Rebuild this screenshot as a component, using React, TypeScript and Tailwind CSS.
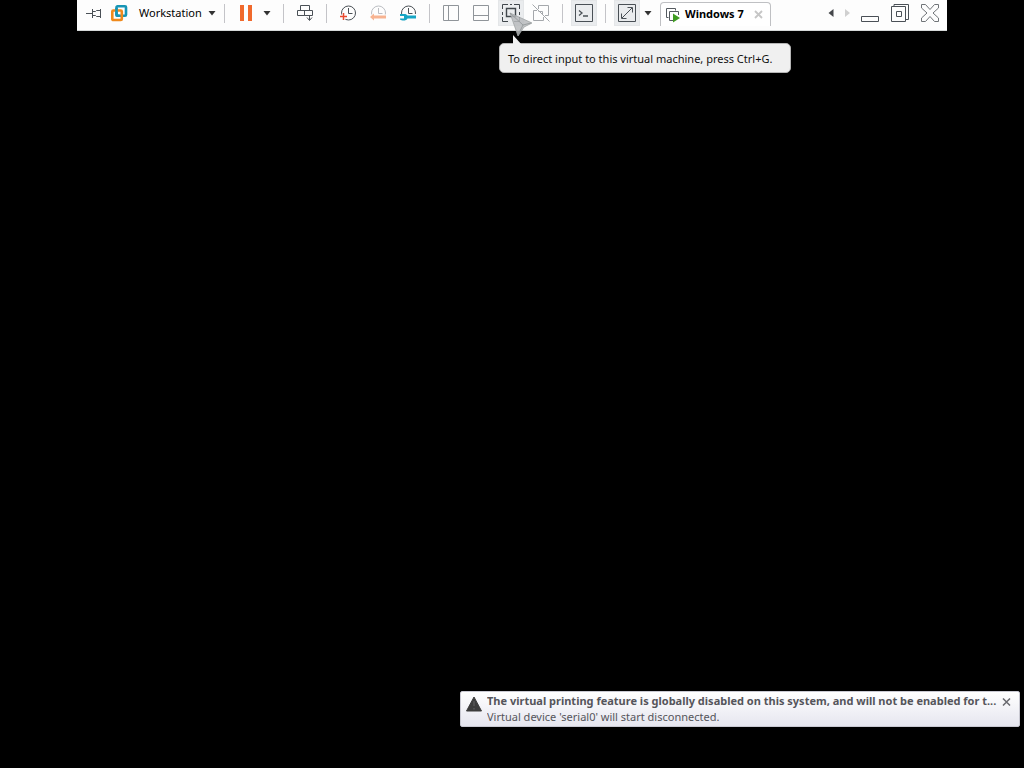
import type { ReactNode } from "react";
import clsx from "clsx";

interface ToolButtonProps {
  label: string;
  active?: boolean;
  children: ReactNode;
}

function ToolButton({ label, active, children }: ToolButtonProps) {
  return (
    <button
      type="button"
      aria-label={label}
      className="flex h-[26px] w-[30px] shrink-0 items-center justify-center"
    >
      <span
        className={clsx(
          "flex h-[26px] w-[26px] items-center justify-center",
          active && "border border-[#e4e6e8] bg-[#eaecee]"
        )}
      >
        {children}
      </span>
    </button>
  );
}

function Separator() {
  return <div className="mx-1.5 h-[19px] w-px shrink-0 bg-[#c4c4c8]" />;
}

function Caret() {
  return (
    <svg width="8" height="5" viewBox="0 0 8 5" fill="#333" className="shrink-0">
      <path d="M0.5 0h7L4 4.5z" />
    </svg>
  );
}

function CaretButton({ label }: { label: string }) {
  return (
    <button
      type="button"
      aria-label={label}
      className="flex h-[26px] w-3 shrink-0 items-center justify-center"
    >
      <Caret />
    </button>
  );
}

interface IconProps {
  children: ReactNode;
  stroke?: string;
}

/* 20px canvas shared by the toolbar icons */
function Icon({ children, stroke = "#4a5056" }: IconProps) {
  return (
    <svg
      width="20"
      height="20"
      viewBox="0 0 20 20"
      fill="none"
      stroke={stroke}
      className="shrink-0"
    >
      {children}
    </svg>
  );
}

function Clock({ stroke = "#4a5056" }: { stroke?: string }) {
  return (
    <g stroke={stroke}>
      <circle cx="10.5" cy="10" r="7" />
      <path d="M10.5 5v5.5h4" />
    </g>
  );
}

function Toolbar() {
  return (
    <header className="mx-auto flex h-[31px] w-full max-w-[870px] items-start border-b border-[#d5d8d8] bg-[#fdfdfd] px-0.5">
      <div className="flex h-[26px] items-center">
        <ToolButton label="Pin toolbar">
          <Icon>
            <path d="M2 10.5h6M8.5 6v9M8.5 8.5h3l1 -1h4M8.5 12.5h3l1 1h4M16.5 6v9" />
          </Icon>
        </ToolButton>
        <button type="button" className="flex h-[26px] shrink-0 items-center text-[11px]">
          <svg width="20" height="20" viewBox="0 0 20 20" fill="none" strokeWidth="2.6">
            <rect x="7.5" y="3.3" width="9.5" height="9.5" rx="1" stroke="#1795b5" />
            <rect x="3.3" y="7.5" width="9.5" height="9.5" rx="1" stroke="#f08a1c" />
            <path d="M7.5 5v6.8a1 1 0 0 0 1 1h2" stroke="#1795b5" />
          </svg>
          <span className="ml-2.5 w-16 text-left whitespace-nowrap">Workstation</span>
          <span className="mr-0.5 ml-[5px]">
            <Caret />
          </span>
        </button>
        <Separator />

        <ToolButton label="Suspend">
          <svg width="14" height="16" viewBox="0 0 14 16" fill="#f0692c">
            <path d="M1 0h4v16H1zM9 0h4v16H9z" />
          </svg>
        </ToolButton>
        <div className="mr-1">
          <CaretButton label="Power options" />
        </div>
        <Separator />

        <ToolButton label="Send Ctrl+Alt+Del">
          <Icon>
            <path d="M5.5 2.5h9v5h-9zM2.500 7.5h7v5h-7zM9.5 7.5h8v5h-8zM14.5 12v5M12 14.500l2.500 3 2.500-3" />
          </Icon>
        </ToolButton>
        <Separator />

        <ToolButton label="Take snapshot">
          <Icon>
            <Clock />
            <path d="M1 13.5h7.5M5.500 10.5v7" stroke="#fdfdfd" strokeWidth="3.5" />
            <path d="M2 13.5h7M5.500 10v7" stroke="#e8492e" strokeWidth="1.5" />
          </Icon>
        </ToolButton>
        <ToolButton label="Revert snapshot">
          <Icon>
            <Clock stroke="#bbbdc2" />
            <path d="M2 11.5h16v7H2z" fill="#fdfdfd" stroke="none" />
            <path d="M2 14l4-3.500v2h12v3H6v2z" fill="#f7b391" stroke="none" />
          </Icon>
        </ToolButton>
        <ToolButton label="Manage snapshots">
          <Icon>
            <Clock />
            <path d="M1 11h18v8H1z" fill="#fdfdfd" stroke="none" />
            <path
              d="M2 11h4c2 0 3 .7 3.500 1.500H18v3H9.500C8.500 18 4 18 2 16.500v-1h4V13H2z"
              fill="#16a5c4"
              stroke="none"
            />
          </Icon>
        </ToolButton>
        <Separator />

        <ToolButton label="Show library">
          <Icon stroke="#90959a">
            <path d="M2.5 2.5h15v15h-15zM7.5 2.5v15" />
          </Icon>
        </ToolButton>
        <ToolButton label="Show thumbnail bar">
          <Icon stroke="#90959a">
            <path d="M2.5 2.5h15v15h-15zM2.5 12.5h15" />
          </Icon>
        </ToolButton>
        <div className="relative">
          <ToolButton label="Enter full screen" active>
            <Icon stroke="#41474c">
              <path d="M1.5 6v-4.5H7M13 1.5h5.5V6M18.5 9v3M18.5 14v4.5H13M7 18.5H1.5V14M1.500 12V9M9 1.5h2" />
              <path d="M5.5 5.5h9v8h-9z" strokeWidth="1.4" />
            </Icon>
          </ToolButton>
          <Tooltip />
        </div>
        <ToolButton label="Unity">
          <Icon stroke="#a5a8ac">
            <path d="M7.5 6V2.500h10v10H14M6 7.5H2.500v10h10V14M7.500 8.500h4v3M1.500 1.500l17 17" />
          </Icon>
        </ToolButton>
        <Separator />

        <ToolButton label="Open console" active>
          <Icon>
            <path d="M1.5 1.5h17v17h-17z" />
            <path d="M5 7.500l3 2.500-3 2.500M9 13h5" strokeWidth="1.3" />
          </Icon>
        </ToolButton>
        <Separator />

        <ToolButton label="Stretch guest" active>
          <Icon>
            <path d="M1.5 1.5h17v17h-17z" />
            <path d="M5 15L15 5M10.5 4.5h5v5M4.5 10.5v5h5" />
          </Icon>
        </ToolButton>
        <CaretButton label="Stretch options" />
      </div>

      {/* Machine tab */}
      <div className="mt-0.5 ml-1.5 flex h-6 w-[111px] shrink-0 items-center rounded-t-sm border border-b-0 border-[#bfc0c3] bg-white pl-1">
        <svg width="16" height="16" viewBox="0 0 16 16" fill="none" stroke="#555b60">
          <path d="M3.5 10.5h-2v-9h9v2" />
          <path d="M8 13.5H4.5v-9h9V8" />
          <path d="M8 6.500l7 4.500-7 4.500z" fill="#3f9c22" stroke="none" />
        </svg>
        <span className="ml-1 w-16 text-[11px] font-bold whitespace-nowrap">Windows 7</span>
        <button type="button" aria-label="Close tab" className="ml-[5px]">
          <svg width="9" height="9" viewBox="0 0 9 9" stroke="#c6c6c6" strokeWidth="1.8">
            <path d="M1 1l7 7M8 1l-7 7" />
          </svg>
        </button>
      </div>

      {/* Window controls */}
      <div className="ml-auto flex h-[26px] items-center">
        <button type="button" aria-label="Previous tab" className="flex w-4 justify-center">
          <svg width="6" height="8" viewBox="0 0 6 8" fill="#44474a">
            <path d="M5.500 0v8L.5 4z" />
          </svg>
        </button>
        <button type="button" aria-label="Next tab" className="flex w-4 justify-center">
          <svg width="5" height="8" viewBox="0 0 5 8" fill="#d0d0d0">
            <path d="M0 0v8l5-4z" />
          </svg>
        </button>
        <ToolButton label="Minimize">
          <Icon>
            <path d="M1.5 13.5h17v5h-17z" />
          </Icon>
        </ToolButton>
        <ToolButton label="Restore">
          <Icon>
            <path d="M1.5 3.5h14v15h-14zM4 3.500v-2h14.500v15H16M6.500 8.500h5v5h-5z" />
          </Icon>
        </ToolButton>
        <ToolButton label="Close">
          <Icon stroke="#707478">
            <path d="M1.5 1.5h4L10 6.500l4.500-5h4v3.500L13 10l5.500 5v3.500h-4L10 13.500l-4.500 5h-4V15L7 10 1.500 5z" />
          </Icon>
        </ToolButton>
      </div>
    </header>
  );
}

/* Balloon under the full screen button, with the pointer over it */
function Tooltip() {
  return (
    <>
      <div
        role="tooltip"
        className="absolute top-[43px] left-[3px] z-10 flex h-[30px] w-[292px] items-center rounded-[5px] border border-[#b5b5b5] bg-[#f0f0f0] pt-0.5 pl-2 text-[11px] whitespace-nowrap text-[#111]"
      >
        To direct input to this virtual machine, press Ctrl+G.
      </div>
      <svg
        width="36"
        height="36"
        viewBox="0 0 36 36"
        className="pointer-events-none absolute top-2 left-2 z-20"
      >
        <path d="M9 27v10h9z" fill="#f0f0f0" />
        <path
          d="M6 5l22 10-8 4-6 9z"
          fill="#b9bbbd"
          fillOpacity="0.85"
          stroke="#a0a3a5"
          strokeWidth="0.8"
        />
        <path d="M6 5l13 12-5 10M19 17l8-2" fill="none" stroke="#8f9496" strokeWidth="0.8" />
      </svg>
    </>
  );
}

function Notification() {
  return (
    <aside className="mt-auto mr-1 mb-[41px] ml-auto flex h-9 w-full max-w-[560px] items-start rounded-xs border border-[#c9c9d2] bg-gradient-to-b from-white to-[#e6e6ef] pl-[5px] text-[#55555b]">
      <svg width="16" height="16" viewBox="0 0 16 16" className="mt-1 shrink-0">
        <path d="M8 1l7.500 14H.5z" fill="#3d3d3d" stroke="#3d3d3d" strokeLinejoin="round" />
        <path d="M8 5v5M8 12v1.500" stroke="#58585a" strokeWidth="1.5" />
      </svg>
      <div className="ml-[5px] min-w-0 flex-1 pt-px text-[11px] leading-4">
        <p className="truncate font-bold">
          The virtual printing feature is globally disabled on this system, and will not be enabled for t...
        </p>
        <p className="truncate">Virtual device 'serial0' will start disconnected.</p>
      </div>
      <button type="button" aria-label="Dismiss" className="mt-1.5 mr-2 ml-1 shrink-0">
        <svg width="9" height="8" viewBox="0 0 9 8" stroke="#6a6a70" strokeWidth="1.5">
          <path d="M1 .5l7 7M8 .5l-7 7" />
        </svg>
      </button>
    </aside>
  );
}

export default function App() {
  return (
    <main className="flex min-h-screen flex-col bg-black font-['Noto_Sans','Open_Sans',sans-serif] text-black">
      <Toolbar />
      <Notification />
    </main>
  );
}
